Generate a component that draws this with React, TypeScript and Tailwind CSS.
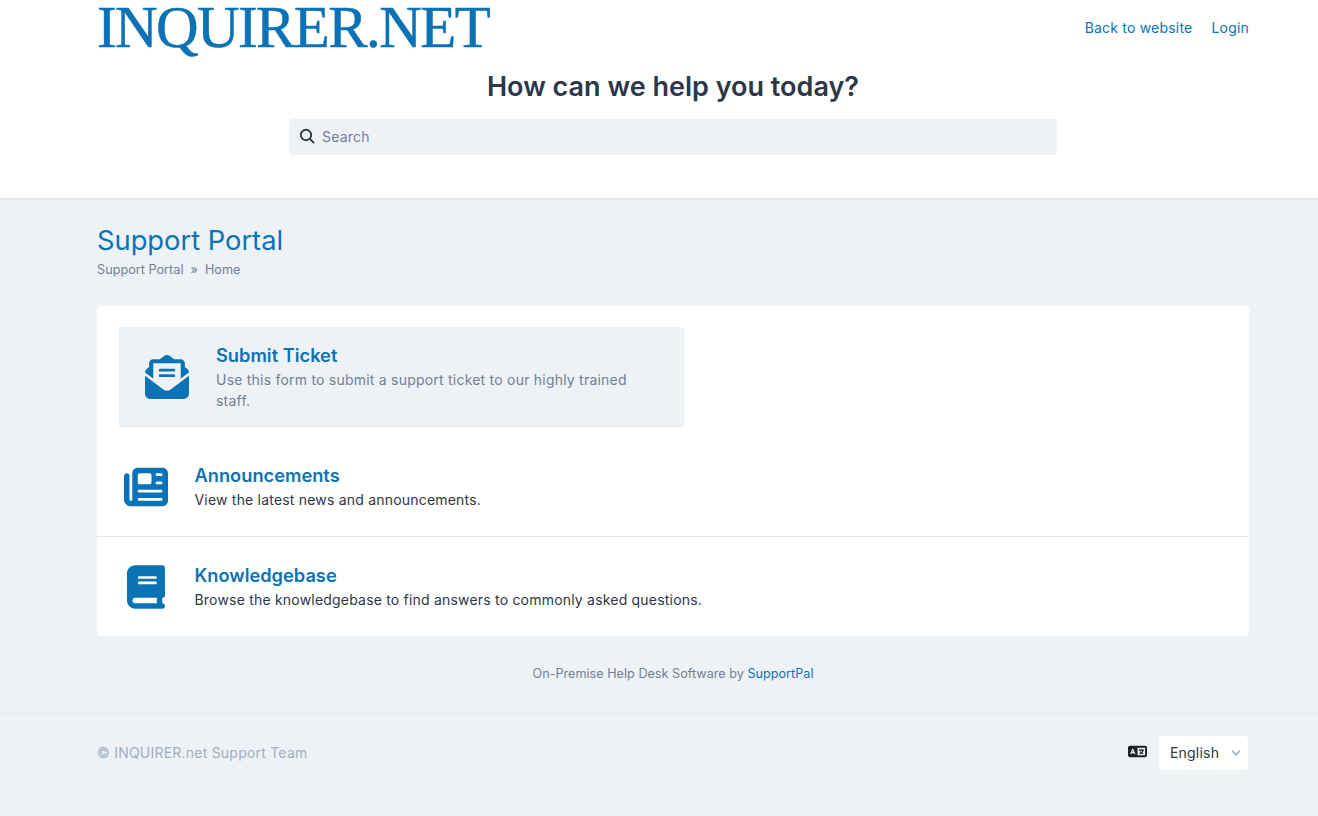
import React from "react";
import { FaEnvelopeOpenText, FaNewspaper, FaBook, FaLanguage } from "react-icons/fa6";
import { ChevronDown } from "lucide-react";

function Row({ icon, title, desc, className }: { icon: React.ReactNode; title: string; desc: string; className: string }) {
  return (
    <div className={`flex items-center ${className}`}>
      <div className="w-[97.5px] pl-[27px] shrink-0 text-[#0b72b5]">{icon}</div>
      <div>
        <div className="text-[18.25px] leading-[24px] font-semibold text-[#0b72b5]">{title}</div>
        <div className="mt-[2px] text-[14px] leading-[21px] text-[#2d3748] tracking-[0.2px]">{desc}</div>
      </div>
    </div>
  );
}

export default function App() {
  return (
    <div className="min-h-[816px] bg-[#edf2f7] font-['Inter',sans-serif] text-[#2d3748]">
      <header className="h-[199px] bg-white border-b border-[#dfe5ec] shadow-[0_1px_2px_rgba(0,0,0,0.05)]">
        <div className="pl-[97px] pr-[69px] flex items-start justify-between">
          <div className="h-[56px] pt-[1px] font-['Liberation_Serif',serif] text-[59px] leading-[52px] tracking-[-1.6px] text-[#0b72b5] [-webkit-text-stroke:0.5px_#0b72b5]">INQUIRER.NET</div>
          <nav className="flex gap-[19px] pt-[19px] text-[14px] leading-[18px] text-[#0b72b5] tracking-[0.2px]">
            <a>Back to website</a>
            <a>Login</a>
          </nav>
        </div>
        <h1 className="mt-[12px] text-center text-[27px] leading-[38px] font-semibold pl-[28px]">How can we help you today?</h1>
        <div className="mt-[13px] w-[768px] ml-[289px] h-[36px] bg-[#edf2f7] rounded flex items-center pl-[10px] gap-[7px]">
          <svg viewBox="0 0 16 16" className="w-[16px] h-[16px] -mt-[2px] text-[#2d3748]" fill="none" stroke="currentColor" strokeWidth="1.9" strokeLinecap="round">
            <circle cx="7" cy="7" r="5.2" />
            <line x1="10.9" y1="10.9" x2="14.6" y2="14.6" />
          </svg>
          <span className="text-[14px] leading-[36px] h-[36px] text-[#718096] tracking-[0.2px]">Search</span>
        </div>
      </header>
      <main className="pl-[97px] pr-[69px]">
        <h2 className="pt-[24px] text-[27.3px] leading-[36px] text-[#0b72b5]">Support Portal</h2>
        <div className="mt-[2px] flex gap-[7px] text-[12.7px] leading-[18px] text-[#718096]">
          <span>Support Portal</span><span>»</span><span>Home</span>
        </div>
        <section className="mt-[27px] bg-white rounded h-[330px] flex flex-col">
          <div className="pt-[21px] pl-[22px]">
            <div className="w-[565px] h-[99px] bg-[#edf2f7] rounded shadow-[0_1px_2px_rgba(0,0,0,0.12)] flex items-center">
              <div className="w-[97px] pl-[26px] shrink-0 text-[#0b72b5]"><FaEnvelopeOpenText className="w-[44px] h-[44px]" /></div>
              <div className="pr-[40px]">
                <div className="text-[18.25px] leading-[24px] font-semibold text-[#0b72b5]">Submit Ticket</div>
                <div className="pt-[2px] text-[14px] leading-[21px] text-[#718096] tracking-[0.22px]">Use this form to submit a support ticket to our highly trained staff.</div>
              </div>
            </div>
          </div>
          <Row className="mt-[11px] h-[100px] border-b border-[#e2e8f0]" icon={<FaNewspaper className="w-[44px] h-[44px]" />} title="Announcements" desc="View the latest news and announcements." />
          <Row className="h-[99px]" icon={<FaBook className="w-[38px] h-[44px] ml-[3px]" />} title="Knowledgebase" desc="Browse the knowledgebase to find answers to commonly asked questions." />
        </section>
        <p className="mt-[29px] text-center text-[12.6px] leading-[18px] text-[#718096] tracking-[0.03px]">On-Premise Help Desk Software by <a className="text-[#0b72b5]">SupportPal</a></p>
      </main>
      <footer className="mt-[30px] border-t border-[#e2e8f0] h-[78px] pl-[97px] pr-[70px] flex items-center justify-between">
        <span className="text-[14px] text-[#a0aec0] tracking-[0.22px]">© INQUIRER.net Support Team</span>
        <div className="flex items-center gap-[12px]">
          <FaLanguage className="w-[19px] h-[19px] text-[#1a202c] -mt-[2px]" />
          <div className="w-[89px] h-[34px] bg-white rounded flex items-center justify-between pl-[11px] pr-[5px]">
            <span className="text-[14px] tracking-[0.2px]">English</span>
            <ChevronDown className="w-[14px] h-[14px] text-[#a0aec0]" strokeWidth={3} />
          </div>
        </div>
      </footer>
    </div>
  );
}
